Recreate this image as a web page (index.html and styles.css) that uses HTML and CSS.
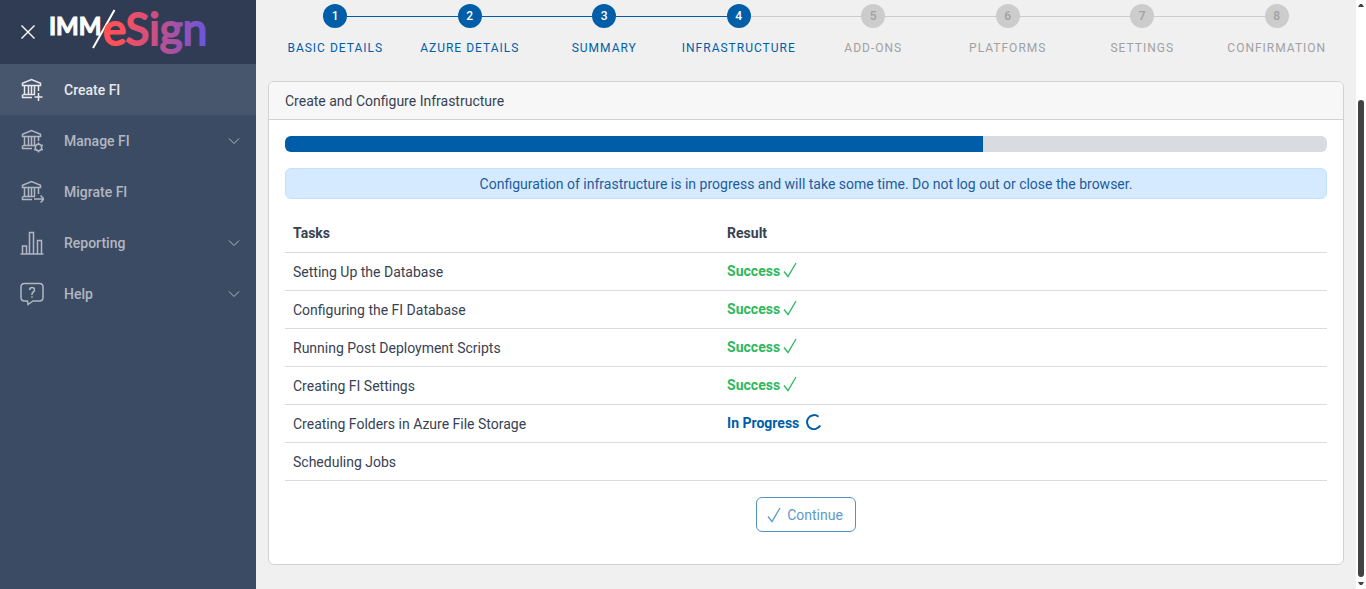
FILE: index.html
```html
<!DOCTYPE html>
<html lang="en">
<head>
    <meta charset="UTF-8">
    <meta name="viewport" content="width=device-width, initial-scale=1.0">
    <title>IMM eSign - Create FI</title>
    <link rel="stylesheet" href="styles.css">
</head>
<body>
    <!-- shared icons -->
    <svg class="symbols" aria-hidden="true">
        <symbol id="bank" viewBox="0 0 24 24">
            <path d="M2.500 7.500V5.300L11.500 1.600l9 3.700v2.200zM4.500 7.500v9M8.500 7.500v9M11.500 7.500v9M14.500 7.500v9M3 16.500h12M2.500 16.500v3.500"/>
        </symbol>
        <symbol id="chevron" viewBox="0 0 12 8">
            <path d="M1 1.500l5 5 5-5"/>
        </symbol>
        <symbol id="check" viewBox="0 0 14 16">
            <path d="M1 9.500l4 5L13 1"/>
        </symbol>
    </svg>

    <div class="layout">
        <aside class="sidebar">
            <div class="brand">
                <button type="button" class="close" aria-label="Close menu">
                    <svg viewBox="0 0 14 14"><path d="M.5.5l13 13M13.500.5l-13 13"/></svg>
                </button>
                <svg class="logo" viewBox="0 0 160 60" role="img" aria-label="IMM eSign">
                    <defs>
                        <linearGradient id="logoColor" gradientUnits="userSpaceOnUse" x1="54" y1="0" x2="156" y2="0">
                            <stop offset="0.15" stop-color="#ff5058"/>
                            <stop offset="0.5" stop-color="#c94f86"/>
                            <stop offset="1" stop-color="#6a55dc"/>
                        </linearGradient>
                    </defs>
                    <text class="logo-imm" x="-1" y="33">IMM</text>
                    <path class="logo-slash" d="M64.500 8L43 46"/>
                    <text class="logo-esign" x="53" y="43">eSign</text>
                </svg>
            </div>
            <nav class="menu">
                <a href="#create" class="menu-item active">
                    <svg class="menu-icon" viewBox="0 0 24 24"><use href="#bank"/><path d="M18.500 8v5M2 19.500h10M18.500 15v8M14.500 19h8"/></svg>
                    <span>Create FI</span>
                </a>
                <a href="#manage" class="menu-item">
                    <svg class="menu-icon" viewBox="0 0 24 24"><use href="#bank"/><path d="M18.500 8v4M2 19.500h10"/><circle cx="18.500" cy="18.500" r="3.200"/><path d="M18.500 13.500v2M18.500 21.500v2M14.200 16l1.700 1M21.100 20l1.700 1M14.200 21l1.700-1M21.100 17l1.700-1"/></svg>
                    <span>Manage FI</span>
                    <svg class="chevron"><use href="#chevron"/></svg>
                </a>
                <a href="#migrate" class="menu-item">
                    <svg class="menu-icon" viewBox="0 0 24 24"><use href="#bank"/><path d="M18.500 8v6M2 19.500h10M14 19h9.500M20.500 15.500l3.500 3.500-3.500 3.500"/></svg>
                    <span>Migrate FI</span>
                </a>
                <a href="#reporting" class="menu-item">
                    <svg class="menu-icon" viewBox="0 0 24 24"><path d="M.5 23h23M2.500 23v-8h4v8M9.500 23V1.500h4V23M17.500 23V9.500h4V23"/></svg>
                    <span>Reporting</span>
                    <svg class="chevron"><use href="#chevron"/></svg>
                </a>
                <a href="#help" class="menu-item">
                    <svg class="menu-icon" viewBox="0 0 24 24"><path d="M4.500 1.500h15q3.500 0 3.500 3.500v10.500q0 3.500-3.500 3.500H13l-5 3.500-.5-3.500h-3Q1 19 1 15.500V5q0-3.500 3.500-3.500z"/><path d="M9.700 8q0-2.500 2.400-2.500T14.500 8q0 1.300-1.200 2T12 12v1M12 14.300v1.500"/></svg>
                    <span>Help</span>
                    <svg class="chevron"><use href="#chevron"/></svg>
                </a>
            </nav>
        </aside>

        <main class="content">
            <ol class="steps">
                <li class="step done"><span class="dot">1</span><span class="step-name">Basic Details</span></li>
                <li class="step done"><span class="dot">2</span><span class="step-name">Azure Details</span></li>
                <li class="step done"><span class="dot">3</span><span class="step-name">Summary</span></li>
                <li class="step done current"><span class="dot">4</span><span class="step-name">Infrastructure</span></li>
                <li class="step"><span class="dot">5</span><span class="step-name">Add-Ons</span></li>
                <li class="step"><span class="dot">6</span><span class="step-name">Platforms</span></li>
                <li class="step"><span class="dot">7</span><span class="step-name">Settings</span></li>
                <li class="step"><span class="dot">8</span><span class="step-name">Confirmation</span></li>
            </ol>

            <section class="card">
                <h1 class="card-header">Create and Configure Infrastructure</h1>
                <div class="card-body">
                    <div class="progress" role="progressbar" aria-label="Configuration progress" aria-valuenow="67" aria-valuemin="0" aria-valuemax="100">
                        <div class="progress-bar" style="width: 67%"></div>
                    </div>
                    <div class="alert">Configuration of infrastructure is in progress and will take some time. Do not log out or close the browser.</div>
                    <table class="tasks">
                        <thead>
                            <tr><th>Tasks</th><th>Result</th></tr>
                        </thead>
                        <tbody>
                            <tr><td>Setting Up the Database</td><td><span class="result success">Success<svg class="check"><use href="#check"/></svg></span></td></tr>
                            <tr><td>Configuring the FI Database</td><td><span class="result success">Success<svg class="check"><use href="#check"/></svg></span></td></tr>
                            <tr><td>Running Post Deployment Scripts</td><td><span class="result success">Success<svg class="check"><use href="#check"/></svg></span></td></tr>
                            <tr><td>Creating FI Settings</td><td><span class="result success">Success<svg class="check"><use href="#check"/></svg></span></td></tr>
                            <tr><td>Creating Folders in Azure File Storage</td><td><span class="result running">In Progress<svg class="spinner" viewBox="0 0 16 16"><path d="M12.500 2.700A7 7 0 1 0 14.200 11.500"/></svg></span></td></tr>
                            <tr><td>Scheduling Jobs</td><td></td></tr>
                        </tbody>
                    </table>
                    <div class="actions">
                        <button type="button" class="btn" disabled><svg class="check"><use href="#check"/></svg>Continue</button>
                    </div>
                </div>
            </section>
        </main>

        <div class="scrollbar" aria-hidden="true">
            <svg class="arrow" viewBox="0 0 6 3"><path d="M0 3l2-3h2l2 3z"/></svg>
            <div class="thumb"></div>
            <svg class="arrow" viewBox="0 0 6 3"><path d="M0 0l2 3h2l2-3z"/></svg>
        </div>
    </div>
</body>
</html>
```

FILE: styles.css
```css
* { box-sizing: border-box; }
body { margin: 0; font-family: Roboto, "Liberation Sans", sans-serif; font-size: 14px; line-height: 21px; color: #374253; background: #f0f0f0; }
svg { fill: none; stroke: currentColor; flex: none; }
.symbols { display: none; }
.layout { display: flex; min-height: 100vh; }

/* sidebar */
.sidebar { flex: none; width: 256px; background: #3c4b64; }
.brand { display: flex; align-items: center; height: 64px; padding-left: 21px; background: #303c54; }
.close { display: flex; padding: 0; border: 0; background: none; color: #fff; cursor: pointer; }
.close svg { width: 14px; height: 14px; stroke-width: 1.4; }
.logo { width: 160px; height: 60px; margin-left: 15px; }
.logo text { stroke: none; font-family: Lato, sans-serif; }
.logo .logo-imm { fill: #fff; stroke: #fff; stroke-width: 1; font-size: 24px; font-weight: 700; }
.logo-slash { stroke: #fff; stroke-width: 2; }
.logo .logo-esign { fill: url(#logoColor); stroke: url(#logoColor); stroke-width: 2; font-size: 44px; font-weight: 400; }
.menu-item { display: flex; align-items: center; height: 51px; padding: 0 16px 0 20px; color: #b1b7c1; font-weight: 500; text-decoration: none; }
.menu-item span { padding-top: 2px; }
.menu-item.active { background: #48566d; color: #e7e9ec; }
.menu-icon { width: 24px; height: 24px; margin-right: 20px; stroke-width: 1.5; }
.chevron { width: 12px; height: 8px; margin-left: auto; }

/* steps */
.content { flex: 1; min-width: 0; padding: 4px 12px 24px; }
.steps { display: flex; margin: 0 0 22px; padding: 0; list-style: none; }
.step { display: grid; grid-template-columns: 1fr 24px 1fr; align-items: center; row-gap: 9px; flex: 1 1 0; color: #a1a1a1; }
.step::before, .step::after { content: ""; height: 1px; background: #ccc; grid-row: 1; }
.step::before { grid-column: 1; }
.step::after { grid-column: 3; }
.step:first-child::before, .step:last-child::after { visibility: hidden; }
.dot { grid-column: 2; grid-row: 1; height: 24px; border-radius: 50%; background: #ccc; font-size: 12px; font-weight: 500; line-height: 25px; text-align: center; }
.step-name { grid-column: 1 / 4; font-size: 12px; line-height: 22px; letter-spacing: 1px; text-align: center; text-transform: uppercase; }
.done { color: #005ea8; }
.done .dot { background: #005ea8; color: #fff; }
.done::before, .done:not(.current)::after { background: #005ea8; }

/* card */
.card { background: #fff; border: 1px solid #cfd1d4; border-radius: 6px; overflow: hidden; }
.card-header { margin: 0; padding: 9px 16px 7px; background: #f7f7f7; border-bottom: 1px solid #cfd1d4; font-size: 14px; font-weight: 400; line-height: 21px; }
.card-body { padding: 16px; }
.progress { height: 16px; margin-bottom: 16px; border-radius: 6px; background: #d8dbe0; overflow: hidden; }
.progress-bar { height: 100%; background: #005ea8; }
.alert { padding: 5px 16px 3px; border: 1px solid #c2e0ff; border-radius: 6px; background: #d6eaff; color: #1d5c9b; text-align: center; }
.tasks { width: 100%; margin-top: 16px; border-collapse: separate; border-spacing: 0; table-layout: fixed; }
.tasks th, .tasks td { height: 38px; padding: 8px; border-bottom: 1px solid #d8dbe0; text-align: left; }
.tasks td:first-child { padding: 9px 8px 7px; }
.tasks th:first-child { width: 41.66%; }
.result { display: flex; align-items: center; font-weight: 700; }
.success { color: #2eb85c; }
.running { color: #005ea8; }
.check { width: 14px; height: 16px; stroke-width: 1.3; }
.result svg { margin: 0 0 3px 3px; }
.result .spinner { width: 16px; height: 16px; margin-left: 7px; stroke-width: 2; }
.actions { display: flex; justify-content: center; padding: 16px 0; }
.btn { display: flex; align-items: center; gap: 6px; height: 35px; padding: 1px 12px 0 10px; border: 1px solid #5292c5; border-radius: 6px; background: #fff; color: #5e99c8; font: inherit; }

/* page scrollbar */
.scrollbar { display: flex; flex-direction: column; align-items: center; justify-content: space-between; flex: none; width: 10px; padding: 4px 0; background: #fff; color: #424242; }
.arrow { width: 6px; height: 3px; fill: currentColor; stroke: none; }
.thumb { width: 6px; flex: 1; margin: 93px 0 5px; border-radius: 3px; background: #424242; }
```
